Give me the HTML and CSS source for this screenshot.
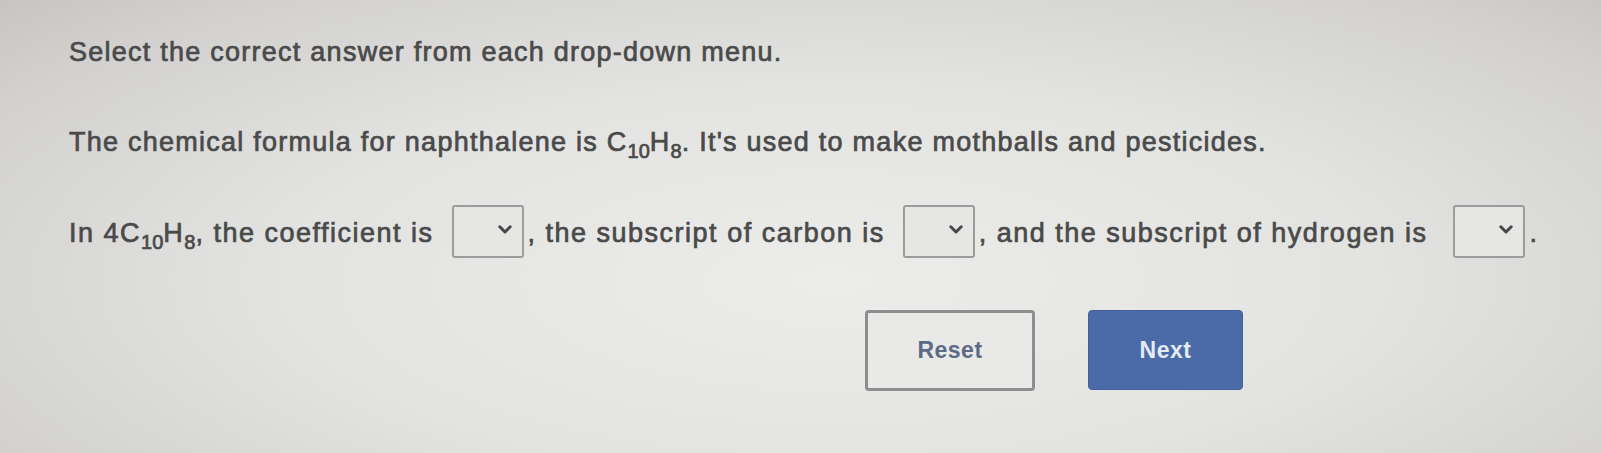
FILE: index.html
```html
<!DOCTYPE html>
<html>
<head>
  <meta charset="UTF-8">
  <meta name="viewport" content="width=device-width, initial-scale=1.0">
  <title>Select the correct answer</title>
  <link rel="stylesheet" href="styles.css">
</head>
<body>
  <div class="question">
    <p class="prompt">Select the correct answer from each drop-down menu.</p>

    <p class="line intro">The chemical formula for naphthalene is C<sub>10</sub>H<sub>8</sub>. It's used to make mothballs and pesticides.</p>

    <p class="line fill">In 4C<sub>10</sub>H<sub>8</sub>, the coefficient is<span class="dropdown"><select aria-label="coefficient"><option value=""></option><option>4</option><option>10</option><option>8</option></select><svg viewBox="0 0 14 9" width="14" height="9"><path d="M1.8 1.8 7 7l5.2-5.2" fill="none" stroke="#474747" stroke-width="3" stroke-linecap="round" stroke-linejoin="round"/></svg></span>, the subscript of carbon is<span class="dropdown"><select aria-label="carbon subscript"><option value=""></option><option>4</option><option>10</option><option>8</option></select><svg viewBox="0 0 14 9" width="14" height="9"><path d="M1.8 1.8 7 7l5.2-5.2" fill="none" stroke="#474747" stroke-width="3" stroke-linecap="round" stroke-linejoin="round"/></svg></span>, and the subscript of hydrogen is<span class="dropdown wide"><select aria-label="hydrogen subscript"><option value=""></option><option>4</option><option>10</option><option>8</option></select><svg viewBox="0 0 14 9" width="14" height="9"><path d="M1.8 1.8 7 7l5.2-5.2" fill="none" stroke="#474747" stroke-width="3" stroke-linecap="round" stroke-linejoin="round"/></svg></span>.</p>

    <div class="actions">
      <button type="reset" class="btn reset">Reset</button>
      <button type="button" class="btn next">Next</button>
    </div>
  </div>
</body>
</html>
```

FILE: styles.css
```css
:root {
  --text: #4a4a4a; --border: #8e8e8e; --blue: #4a6aa8;
}
html { box-sizing: border-box; }
*, *:before, *:after { box-sizing: inherit; }
body {
  margin: 0; width: 1601px; height: 453px; overflow: hidden;
  font-family: "Liberation Sans", Arial, sans-serif; color: var(--text);
  background: radial-gradient(ellipse 75% 95% at 52% 62%, #ececea 0%, #e3e3e2 45%, #d2d1cf 80%, #c2c1be 100%);
}
.question { padding: 37px 0 0 69px; }
.prompt, .line {
  margin: 0; font-size: 27px; letter-spacing: 1.25px; white-space: nowrap;
  -webkit-text-stroke: 0.7px var(--text);
}
.prompt { line-height: 30px; }
.intro { margin-top: 59px; line-height: 32px; }
.fill { margin-top: 47px; line-height: 56px; letter-spacing: 1.5px; }
sub { font-size: 20px; vertical-align: -7px; line-height: 0; letter-spacing: 0; }
.dropdown {
  position: relative; display: inline-block; vertical-align: middle;
  width: 72px; height: 53px; margin: -6px 4px 0 18px;
}
.dropdown.wide { margin-left: 26px; }
.dropdown select {
  appearance: none; -webkit-appearance: none; width: 72px; height: 53px; display: block;
  border: 2px solid #9c9c9c; border-radius: 3px; background: #e6e6e5; color: var(--text);
  font: inherit;
}
.dropdown svg { position: absolute; right: 12px; top: 20px; pointer-events: none; }
.actions { display: flex; gap: 53px; margin: 49px 0 0 796px; }
.btn {
  height: 81px; border-radius: 4px; font-family: "Liberation Sans", Arial, sans-serif;
  font-size: 23px; font-weight: bold; letter-spacing: 0.5px; cursor: pointer;
}
.btn.reset { width: 170px; background: #e9e9e8; border: 3px solid var(--border); color: #5d6a86; }
.btn.next { width: 155px; height: 80px; background: var(--blue); border: 1px solid #42609b; color: #e4ebf7; }
```
